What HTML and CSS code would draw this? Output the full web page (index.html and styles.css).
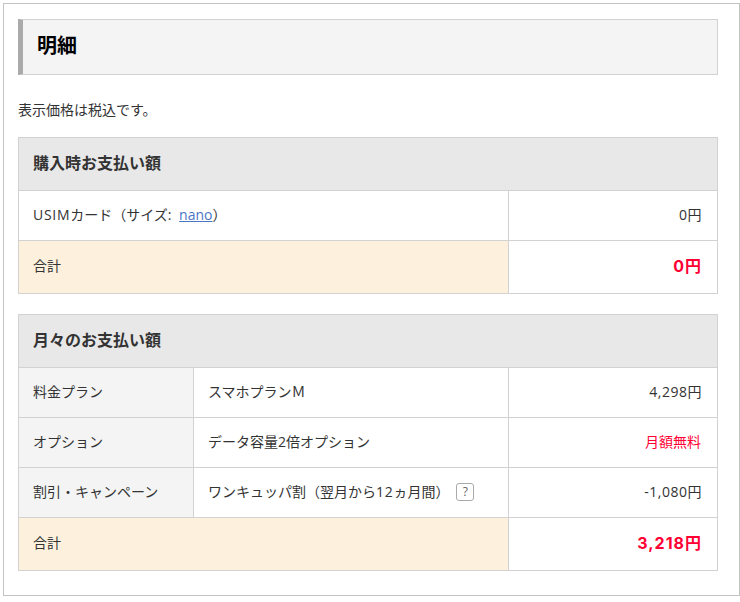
FILE: index.html
```html
<!DOCTYPE html>
<html lang="ja">
<head>
<meta charset="utf-8">
<title>明細</title>
<link rel="stylesheet" href="styles.css">
</head>
<body>
<main class="panel">
  <h2 class="title">明細</h2>
  <p class="note">表示価格は税込です。</p>
  <table class="bill bill-first">
    <colgroup><col class="c1"><col class="c2"><col class="c3"></colgroup>
    <tr class="head"><th colspan="3">購入時お支払い額</th></tr>
    <tr class="row"><td colspan="2"><span class="latin">USIM</span>カード（サイズ<span class="sep">: </span><a href="#">nano</a>）</td><td class="price amount">0円</td></tr>
    <tr class="total"><td colspan="2" class="total-label">合計</td><td class="price total-price">0円</td></tr>
  </table>
  <table class="bill">
    <colgroup><col class="c1"><col class="c2"><col class="c3"></colgroup>
    <tr class="head"><th colspan="3">月々のお支払い額</th></tr>
    <tr class="row"><td class="label">料金プラン</td><td>スマホプランＭ</td><td class="price amount">4,298円</td></tr>
    <tr class="row"><td class="label">オプション</td><td>データ容量2倍オプション</td><td class="price free">月額無料</td></tr>
    <tr class="row"><td class="label">割引・キャンペーン</td><td>ワンキュッパ割（翌月から<span class="latin">12</span>ヵ月間）<span class="help">?</span></td><td class="price amount">-1,080円</td></tr>
    <tr class="total"><td colspan="2" class="total-label">合計</td><td class="price total-price">3,218円</td></tr>
  </table>
</main>
</body>
</html>
```
FILE: styles.css
```css
* { box-sizing: border-box; }
html, body { margin: 0; background: #fff; }
body {
  font-family: "Open Sans", "Noto Sans CJK JP", sans-serif;
  font-size: 14px;
  color: #333;
}
.panel {
  width: 737px;
  height: 593px;
  margin: 3px 0 0 3px;
  padding: 15px 21px 0 14px;
  border: 1px solid #c4c4c4;
}
.title {
  height: 56px;
  margin: 0;
  padding: 0 0 6px 14px;
  display: flex;
  align-items: center;
  background: #f4f4f4;
  border: 1px solid #d2d2d2;
  border-left: 5px solid #aaa;
  font-size: 20px;
  font-weight: 700;
  color: #000;
}
.note {
  height: 62px;
  margin: 0;
  padding-top: 25px;
  line-height: 20px;
}
.bill {
  width: 699px;
  table-layout: fixed;
  border-collapse: collapse;
}
.bill-first { margin-bottom: 20px; }
.c1 { width: 175px; }
.c2 { width: 315px; }
.c3 { width: 209px; }
.bill th, .bill td {
  border: 1px solid #d2d2d2;
  padding: 0 15px 2px 14px;
  line-height: 20px;
  text-align: left;
  vertical-align: middle;
  font-weight: 400;
}
.bill .head th {
  height: 53px;
  background: #e8e8e8;
  font-size: 16px;
  font-weight: 700;
}
.row td { height: 50px; }
.total td { height: 53px; }
.bill .label { background: #f4f4f4; }
.bill .total-label { background: #fdf1de; }
.bill .price { text-align: right; }
.bill .amount { letter-spacing: .5px; }
.bill .free { color: #f03; padding-right: 16px; }
.bill .total-price {
  color: #f03;
  font-family: Inter, "Noto Sans CJK JP", sans-serif;
  font-size: 16px;
  font-weight: 700;
  letter-spacing: 1px;
}
.latin { letter-spacing: .7px; }
.sep { letter-spacing: 2px; }
a { color: #4a76c6; }
.help {
  display: inline-block;
  width: 18px;
  height: 18px;
  margin-left: 7px;
  border: 1px solid #aaa;
  border-radius: 3px;
  font-size: 12px;
  line-height: 15px;
  text-align: center;
  color: #666;
  vertical-align: 1px;
}
```
